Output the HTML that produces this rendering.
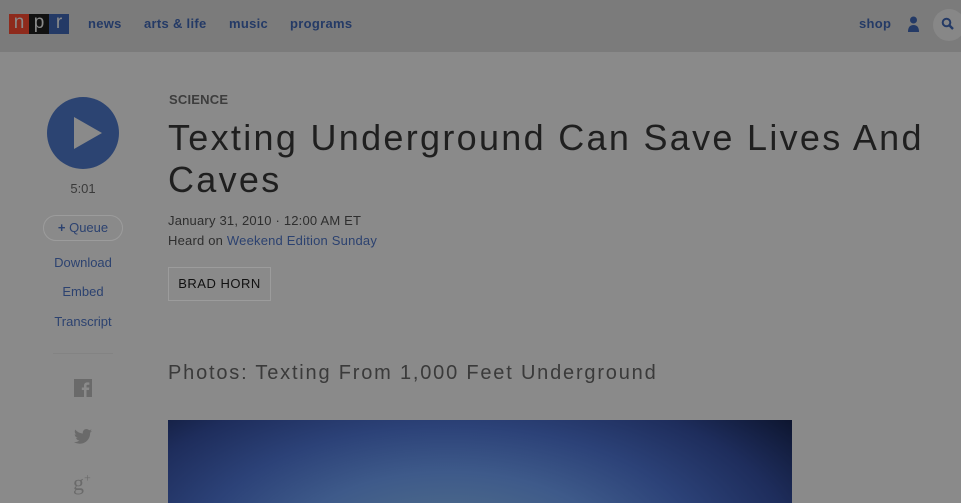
<!DOCTYPE html>
<html><head><meta charset="utf-8"><style>
*{margin:0;padding:0;box-sizing:border-box}
body{width:961px;height:503px;overflow:hidden;background:#8a8a8a;font-family:"Liberation Sans",sans-serif;position:relative}
.hdr{position:absolute;left:0;top:0;width:961px;height:52px;background:#7b7b7b}
.logo{position:absolute;left:9px;top:14px;height:20px;display:flex}
.logo span{width:20px;height:20px;color:#8a8a8a;font-size:19px;line-height:17px;text-align:center;display:block}
.nav{position:absolute;top:16px;font-size:13px;font-weight:bold;color:#243a66;letter-spacing:.3px}
.a{position:absolute}
.blue{color:#2c4270}
</style></head><body>
<div class="hdr">
 <div class="logo"><span style="background:#8e2a1c">n</span><span style="background:#111">p</span><span style="background:#243a66">r</span></div>
 <div class="nav" style="left:88px">news</div>
 <div class="nav" style="left:144px">arts &amp; life</div>
 <div class="nav" style="left:229px">music</div>
 <div class="nav" style="left:290px">programs</div>
 <div class="nav" style="left:859px">shop</div>
 <svg class="a" style="left:907px;top:16px" width="13" height="17" viewBox="0 0 13 17"><circle cx="6.5" cy="4" r="3.5" fill="#243a66"/><path d="M1 16 Q1 9 6.5 9 Q12 9 12 16Z" fill="#243a66"/></svg>
 <div class="a" style="left:933px;top:9px;width:32px;height:32px;border-radius:50%;background:#878787"></div>
 <svg class="a" style="left:941px;top:17px" width="14" height="14" viewBox="0 0 14 14"><circle cx="5.5" cy="5.5" r="3.8" stroke="#243a66" stroke-width="2" fill="none"/><path d="M8.5 8.5L12 12" stroke="#243a66" stroke-width="2.4"/></svg>
</div>

<div class="a" style="left:47px;top:97px;width:72px;height:72px;border-radius:50%;background:#2c4472"></div>
<svg class="a" style="left:47px;top:97px" width="72" height="72"><path d="M27 20 L55 36 L27 52Z" fill="#8a8a8a"/></svg>
<div class="a" style="left:47px;top:181px;width:72px;text-align:center;font-size:13px;color:#3a3a3a">5:01</div>
<div class="a" style="left:43px;top:215px;width:80px;height:26px;border:1px solid #9c9c9c;border-radius:13px;text-align:center;font-size:13px;line-height:24px;color:#2c4270"><b>+</b> Queue</div>
<div class="a blue" style="left:33px;top:255px;width:100px;text-align:center;font-size:13px">Download</div>
<div class="a blue" style="left:33px;top:284px;width:100px;text-align:center;font-size:13px">Embed</div>
<div class="a blue" style="left:33px;top:314px;width:100px;text-align:center;font-size:13px">Transcript</div>
<div class="a" style="left:53px;top:353px;width:60px;height:1px;background:#838383"></div>
<svg class="a" style="left:74px;top:379px" width="18" height="18"><rect width="18" height="18" fill="#6a6a6a"/><path d="M12.5 18V11H15L15.3 8.5H12.5V7C12.5 6.2 12.8 5.8 13.8 5.8H15.4V3.5C14.8 3.4 14 3.4 13.2 3.4 11.2 3.4 10 4.6 10 6.7V8.5H7.8V11H10V18Z" fill="#8a8a8a"/></svg>
<svg class="a" style="left:74px;top:429px" width="18" height="15" viewBox="0 0 24 20"><path d="M24 2.4c-.9.4-1.8.7-2.8.8 1-.6 1.8-1.6 2.2-2.7-1 .6-2 1-3.1 1.2C19.3.7 18 0 16.6 0c-2.7 0-4.9 2.2-4.9 4.9 0 .4 0 .8.1 1.1C7.7 5.8 4.1 3.9 1.7.9c-.4.7-.7 1.6-.7 2.5 0 1.7.9 3.2 2.2 4.1-.8 0-1.6-.2-2.2-.6v.1c0 2.4 1.7 4.4 3.9 4.8-.4.1-.8.2-1.3.2-.3 0-.6 0-.9-.1.6 2 2.4 3.4 4.6 3.4-1.7 1.3-3.8 2.1-6.1 2.1H0c2.2 1.4 4.8 2.2 7.5 2.2 9.1 0 14-7.5 14-14v-.6c1-.7 1.8-1.6 2.5-2.6z" fill="#6a6a6a"/></svg>
<div class="a" style="left:73px;top:470px;font-family:'Liberation Serif',serif;font-size:22px;color:#6a6a6a">g<sup style="font-size:12px">+</sup></div>

<div class="a" style="left:169px;top:92px;font-size:13px;font-weight:bold;color:#3d3d3d;letter-spacing:.2px">SCIENCE</div>
<div class="a" style="left:168px;top:117px;width:790px;font-size:36px;line-height:42px;color:#1f1f1f;letter-spacing:2.3px">Texting Underground Can Save Lives And Caves</div>
<div class="a" style="left:168px;top:213px;font-size:13px;color:#2e2e2e;letter-spacing:.2px">January 31, 2010 · 12:00 AM ET</div>
<div class="a" style="left:168px;top:233px;font-size:13px;color:#2e2e2e;letter-spacing:.2px">Heard on <span class="blue">Weekend Edition Sunday</span></div>
<div class="a" style="left:168px;top:267px;width:103px;height:34px;border:1px solid #9c9c9c;text-align:center;font-size:13px;line-height:32px;color:#111;letter-spacing:.5px">BRAD HORN</div>
<div class="a" style="left:168px;top:362px;font-size:20px;color:#3a3a3a;letter-spacing:1.8px">Photos: Texting From 1,000 Feet Underground</div>
<div class="a" style="left:168px;top:420px;width:624px;height:83px;background:radial-gradient(ellipse 460px 230px at 45% 160%,#56748a 0%,#3e5a8a 35%,#2c4278 55%,#1e2d5c 75%,#080e22 100%)"></div>
</body></html>
